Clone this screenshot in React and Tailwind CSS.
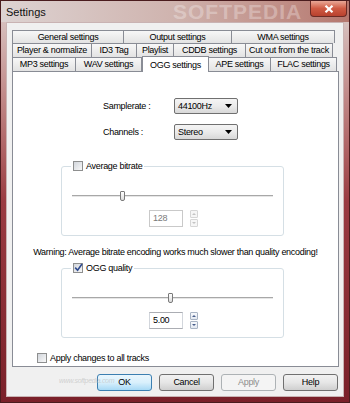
const FONT = "font-['Liberation_Sans',Arial,sans-serif] tracking-[-0.3px]";

function Checkbox({ checked }) {
  return (
    <span className="inline-flex h-[10px] w-[10px] shrink-0 items-center justify-center border border-[#8e8f8f] bg-white">
      <span className="relative flex h-[8px] w-[8px] items-center justify-center bg-gradient-to-br from-[#d2d6dc] to-[#f8f8f8]">
        {checked && (
          <svg width="9" height="9" viewBox="0 0 9 9" className="absolute -top-[1px] left-0">
            <path d="M1.2 4.6 L3.6 7.2 L8 1" fill="none" stroke="#2f4a8e" strokeWidth="1.6" />
          </svg>
        )}
      </span>
    </span>
  );
}

function Tab({ label, w, first, active }) {
  if (active) {
    return (
      <div
        className={`relative z-10 -mb-[1px] flex h-[16px] items-start justify-center border border-b-0 border-[#898c95] bg-white pt-[3px] text-[9px] leading-[10px] ${w}`}
      >
        {label}
      </div>
    );
  }
  return (
    <div
      className={`flex h-full items-center justify-center whitespace-nowrap border-t border-r border-[#898c95] bg-gradient-to-b from-[#f7f7f7] to-[#e3e3e3] text-[9px] leading-none ${first ? 'border-l' : ''} ${w}`}
    >
      {label}
    </div>
  );
}

function Combo({ value }) {
  return (
    <div className="flex h-[16px] w-[64px] items-center justify-between rounded-[2px] border border-[#707070] bg-gradient-to-b from-[#f4f4f4] via-[#ebebeb] to-[#d8d8d8] pl-[3px] pr-[5px] text-[9px] leading-none">
      <span>{value}</span>
      <svg width="7" height="4" viewBox="0 0 7 4">
        <path d="M0 0h7L3.5 4z" fill="#000" />
      </svg>
    </div>
  );
}

function Slider({ pos }) {
  return (
    <div className="relative mx-[10px] h-[10px]">
      <div className="absolute left-0 right-0 top-[4px] h-[2px] border-t border-[#a8a8a8] bg-[#e6e6e6]" />
      <div
        className="absolute top-0 h-[10px] w-[5px] rounded-b-[2px] rounded-t-[1px] border border-[#7a7a7a] bg-gradient-to-b from-white to-[#dcdcdc]"
        style={{ left: pos }}
      />
    </div>
  );
}

function Spin({ disabled }) {
  const box = disabled
    ? 'border-[#d6d6d6] bg-[#f6f6f6]'
    : 'border-[#a9b4c4] bg-gradient-to-b from-[#f7f9fc] to-[#e4e9f1]';
  const fill = disabled ? '#c4c4c4' : '#4a5f8c';
  return (
    <div className="flex h-[17px] w-[8px] flex-col gap-[1px]">
      <div className={`flex flex-1 items-center justify-center rounded-[1px] border ${box}`}>
        <svg width="4" height="2" viewBox="0 0 4 2">
          <path d="M0 2h4L2 0z" fill={fill} />
        </svg>
      </div>
      <div className={`flex flex-1 items-center justify-center rounded-[1px] border ${box}`}>
        <svg width="4" height="2" viewBox="0 0 4 2">
          <path d="M0 0h4L2 2z" fill={fill} />
        </svg>
      </div>
    </div>
  );
}

function Group({ label, checked, pos, value, disabled }) {
  return (
    <fieldset className="ml-[48px] w-[223px] rounded-[3px] border border-[#d5dfe5] pb-[8px]">
      <legend className="ml-[9px] px-[2px]">
        <span className="flex items-center gap-[3px] text-[9px] leading-[10px]">
          <Checkbox checked={checked} />
          {label}
        </span>
      </legend>
      <div className="mt-[20px]">
        <Slider pos={pos} />
      </div>
      <div className="mt-[9px] flex justify-center gap-[7px] pl-[2px]">
        <div
          className={`flex h-[17px] w-[34px] items-center border pl-[3px] text-[9px] leading-none ${
            disabled ? 'border-[#c9c9c9] text-[#7a7a7a]' : 'border-[#abadb3] border-l-[#d2d6dc] border-r-[#d2d6dc] text-black'
          }`}
        >
          {value}
        </div>
        <Spin disabled={disabled} />
      </div>
    </fieldset>
  );
}

function Button({ label, kind }) {
  const styles = {
    def: 'border-[#3c7fb1] bg-gradient-to-b from-[#eaf6fd] via-[#d9f0fc] to-[#a7d9f5] text-black',
    normal: 'border-[#707070] bg-gradient-to-b from-[#f2f2f2] via-[#e6e6e6] to-[#cfcfcf] text-black',
    off: 'border-[#adb2b5] bg-[#f4f4f4] text-[#8d8d8d]',
  };
  return (
    <div
      className={`flex h-[17px] w-[55px] items-center justify-center rounded-[3px] border text-[9px] leading-none ${styles[kind]}`}
    >
      {label}
    </div>
  );
}

export default function App() {
  return (
    <div
      className={`relative flex h-[403px] w-[350px] flex-col overflow-hidden border border-[#4a1c1e] bg-gradient-to-b from-[#dccfcd] via-[#9a3b42] to-[#7a2029] text-black ${FONT}`}
    >
      {/* title bar */}
      <div className="relative flex h-[21px] shrink-0 items-start justify-between bg-gradient-to-r from-[#ddd3d2] via-[#cfb3ae] to-[#b5776e]">
        <span className="pl-[5px] pt-[5px] text-[11px] leading-[12px] tracking-normal text-[#111]">
          Settings
        </span>
        <span className="pointer-events-none absolute left-[172px] top-[1px] text-[21px] font-bold leading-[20px] tracking-[1px] text-white/30">
          SOFTPEDIA
        </span>
        <div className="mr-[2px] flex h-[16px] w-[37px] items-center justify-center rounded-b-[4px] border border-t-0 border-[#6b2a24] bg-gradient-to-b from-[#e8a796] via-[#cf5a43] to-[#b8412e]">
          <svg width="10" height="8" viewBox="0 0 10 8">
            <path d="M1.5 0.8 L8.5 7.2 M8.5 0.8 L1.5 7.2" stroke="#fff" strokeWidth="2.2" />
          </svg>
        </div>
      </div>

      {/* client area */}
      <div className="mx-[5px] mb-[5px] flex flex-1 flex-col border border-[#c9b3b3] bg-[#f0f0f0] pl-[5px] pr-[5px] pt-[7px]">
        {/* tabs */}
        <div className="flex flex-col">
          <div className="flex h-[13px]">
            <Tab label="General settings" w="w-[112px]" first />
            <Tab label="Output settings" w="w-[108px]" />
            <Tab label="WMA settings" w="w-[103px]" />
          </div>
          <div className="flex h-[14px]">
            <Tab label="Player & normalize" w="w-[80px]" first />
            <Tab label="ID3 Tag" w="w-[45px]" />
            <Tab label="Playlist" w="w-[37px]" />
            <Tab label="CDDB settings" w="w-[72px]" />
            <Tab label="Cut out from the track" w="w-[87px]" />
          </div>
          <div className="flex h-[14px] items-end">
            <Tab label="MP3 settings" w="w-[64px]" first />
            <Tab label="WAV settings" w="w-[66px]" />
            <Tab label="OGG settings" w="w-[67px]" active />
            <Tab label="APE settings" w="w-[62px]" />
            <Tab label="FLAC settings" w="w-[66px]" />
          </div>
        </div>

        {/* panel */}
        <div className="flex h-[296px] w-[327px] flex-col border border-[#898c95] bg-white pt-[26px]">
          <div className="flex items-center pl-[90px]">
            <span className="w-[71px] text-[9px] leading-none">Samplerate :</span>
            <Combo value="44100Hz" />
          </div>
          <div className="mt-[10px] flex items-center pl-[90px]">
            <span className="w-[71px] text-[9px] leading-none">Channels :</span>
            <Combo value="Stereo" />
          </div>

          <div className="mt-[21px]">
            <Group label="Average bitrate" pos="48px" value="128" disabled />
          </div>

          <p className="mt-[10px] whitespace-nowrap text-center text-[9px] leading-[12px]">
            Warning: Average bitrate encoding works much slower than quality encoding!
          </p>

          <div className="mt-[5px]">
            <Group label="OGG quality" checked pos="96px" value="5.00" />
          </div>

          <div className="mt-[15px] flex items-center gap-[3px] pl-[24px] text-[9px] leading-none">
            <Checkbox />
            Apply changes to all tracks
          </div>
        </div>

        {/* buttons */}
        <div className="mt-[7px] flex justify-end gap-[7px]">
          <Button label="OK" kind="def" />
          <Button label="Cancel" kind="normal" />
          <Button label="Apply" kind="off" />
          <Button label="Help" kind="normal" />
        </div>
      </div>

      <span className="pointer-events-none absolute left-[58px] top-[376px] text-[7px] italic leading-none text-[#b8b8b8]/60">
        www.softpedia.com
      </span>
    </div>
  );
}
